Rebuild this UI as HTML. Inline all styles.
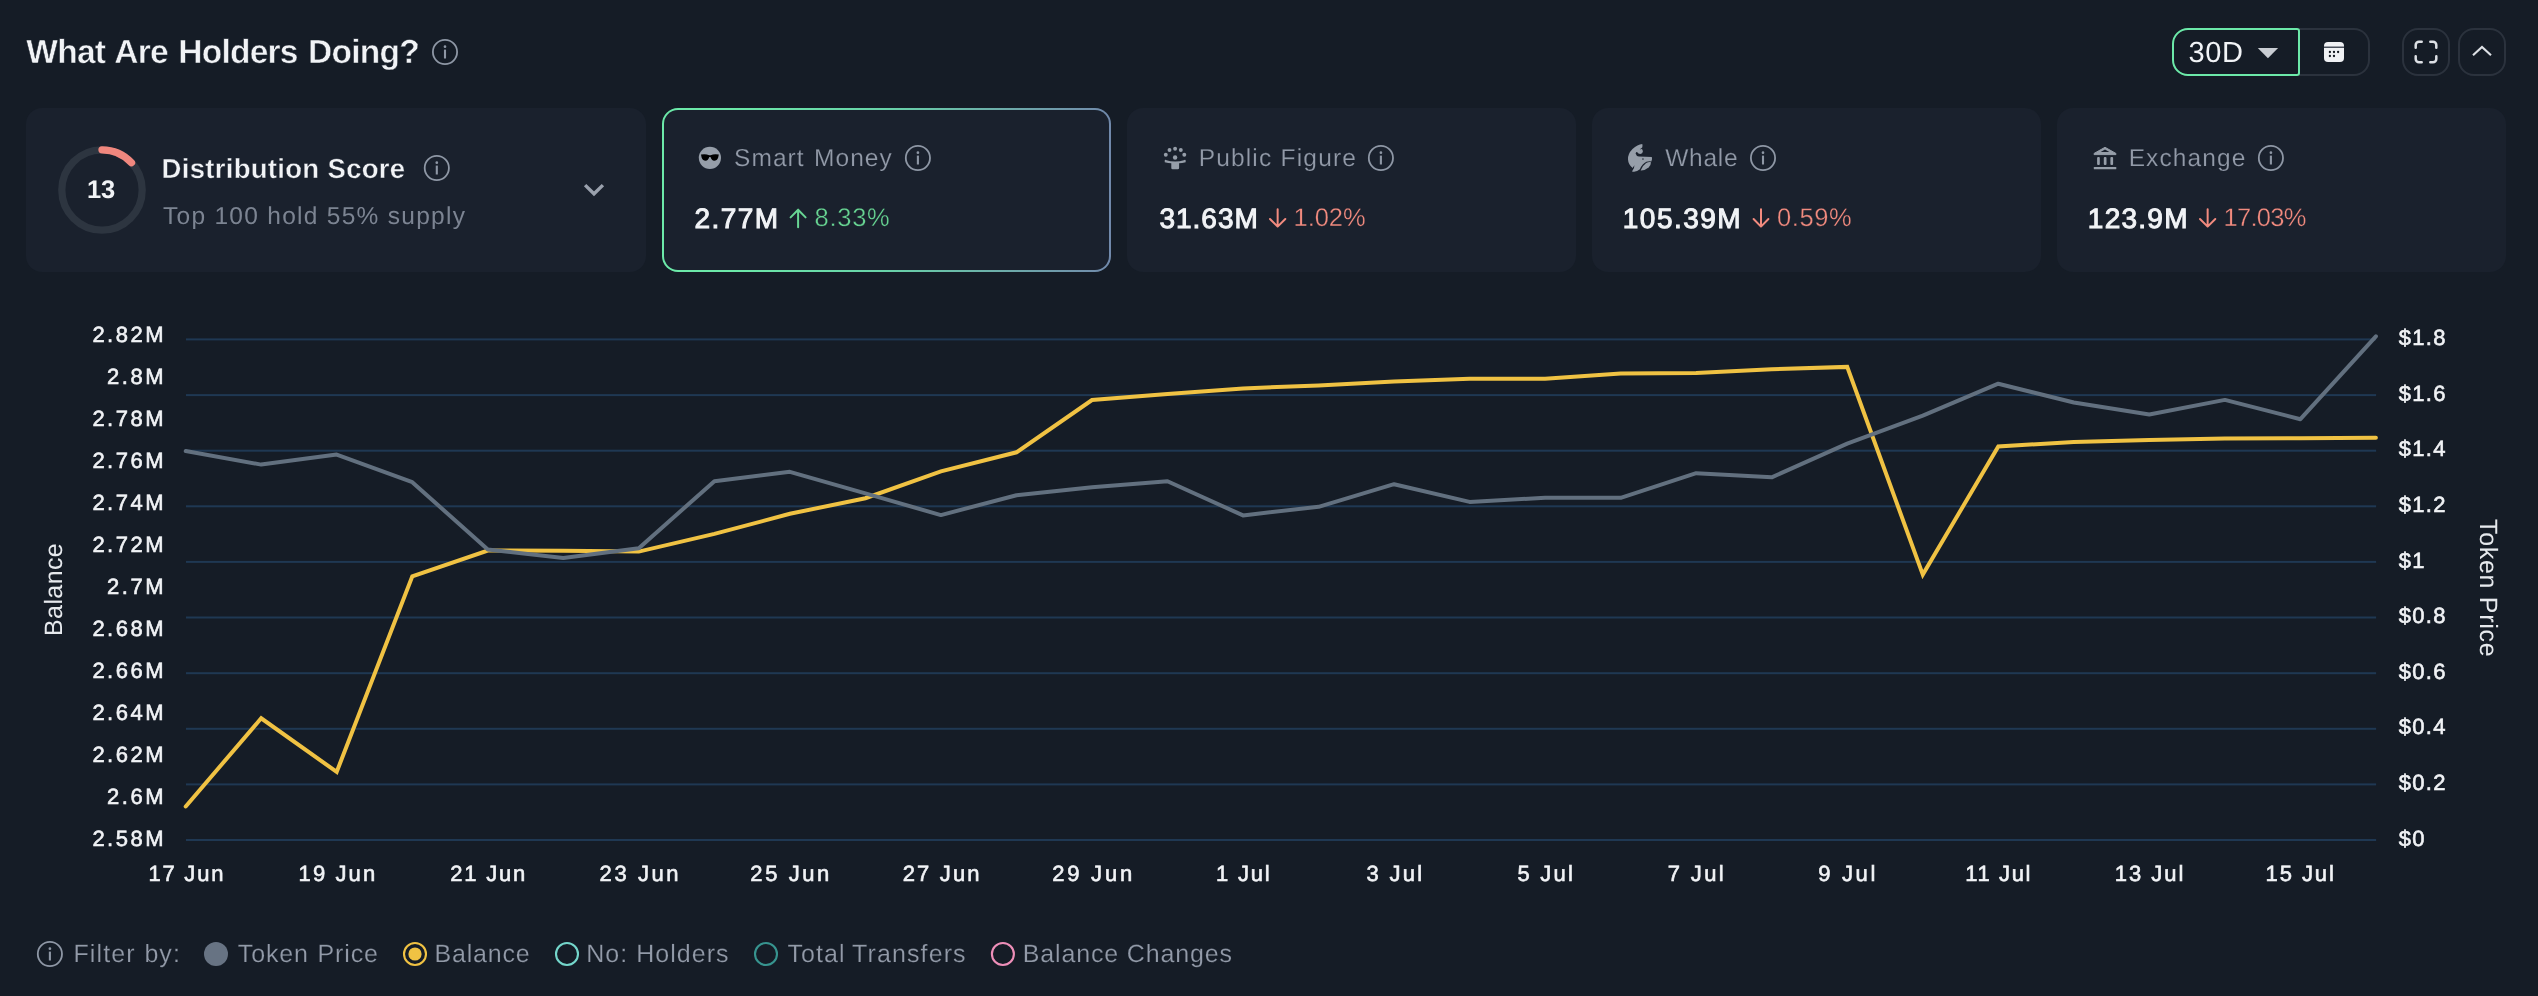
<!DOCTYPE html>
<html><head><meta charset="utf-8"><title>What Are Holders Doing?</title>
<style>
html,body{margin:0;padding:0;background:#151c26;}
body{width:2538px;height:996px;position:relative;overflow:hidden;font-family:"Liberation Sans",sans-serif;}
#root{position:absolute;left:0;top:0;width:2538px;height:996px;will-change:transform;}
.t{position:absolute;white-space:nowrap;line-height:1;text-rendering:geometricPrecision;}
.card{position:absolute;top:108px;height:164px;background:#1a212d;border-radius:16px;}
.abs{position:absolute;}
svg{position:absolute;left:0;top:0;overflow:visible;}
</style></head><body><div id="root">

<div class="card" style="left:26px;width:620px;"></div>
<div class="card" style="left:662px;width:449px;background:linear-gradient(90deg,#6ce9a9 0%,#6ce9a9 15%,#68d2a8 50%,#7189ab 100%);"><div class="abs" style="left:2px;top:2px;right:2px;bottom:2px;background:#1a212d;border-radius:14px;"></div></div>
<div class="card" style="left:1127px;width:449px;"></div>
<div class="card" style="left:1592px;width:449px;"></div>
<div class="card" style="left:2057px;width:449px;"></div>
<div class="abs" style="left:2299px;top:28px;width:69px;height:44px;border:2px solid #2b323d;border-left:none;border-radius:0 16px 16px 0;"></div>
<div class="abs" style="left:2172px;top:28px;width:124px;height:44px;border:2px solid #6ce9a9;border-radius:16px 3px 3px 16px;"></div>
<div class="abs" style="left:2402px;top:28px;width:44px;height:44px;border:2px solid #2b323d;border-radius:16px;"></div>
<div class="abs" style="left:2458px;top:28px;width:44px;height:44px;border:2px solid #2b323d;border-radius:16px;"></div>
<div class="t" style="top:36.00px;font-size:33.5px;letter-spacing:-0.75px;color:#f1f3f6;word-spacing:1.80px;font-weight:700;-webkit-text-stroke:0.5px #151c26;left:26.30px;">What Are Holders Doing?</div>
<div class="t" style="top:155.00px;font-size:27.5px;letter-spacing:0.29px;color:#f1f3f6;word-spacing:0.27px;font-weight:700;-webkit-text-stroke:0.4px #1a212d;left:161.60px;">Distribution Score</div>
<div class="t" style="top:205.00px;font-size:24.5px;letter-spacing:1.28px;color:#7c8492;left:163.00px;">Top 100 hold 55% supply</div>
<div class="t" style="top:178.00px;font-size:25.5px;letter-spacing:-0.38px;color:#f1f3f6;font-weight:700;left:87.10px;">13</div>
<div class="t" style="top:147.00px;font-size:24.5px;letter-spacing:1.02px;color:#929aa8;word-spacing:1.70px;-webkit-text-stroke:0.2px #1a212d;left:734.10px;">Smart Money</div>
<div class="t" style="top:205.00px;font-size:28.0px;letter-spacing:1.45px;color:#f1f3f6;-webkit-text-stroke:1.0px #f1f3f6;left:694.50px;">2.77M</div>
<div class="t" style="top:206.00px;font-size:25.5px;letter-spacing:0.72px;color:#68d593;-webkit-text-stroke:0.35px #1a212d;left:814.60px;">8.33%</div>
<div class="t" style="top:147.00px;font-size:24.5px;letter-spacing:1.16px;color:#929aa8;word-spacing:0.27px;-webkit-text-stroke:0.2px #1a212d;left:1198.70px;">Public Figure</div>
<div class="t" style="top:205.00px;font-size:28.0px;letter-spacing:0.97px;color:#f1f3f6;-webkit-text-stroke:1.0px #f1f3f6;left:1159.50px;">31.63M</div>
<div class="t" style="top:206.00px;font-size:25.5px;letter-spacing:-0.08px;color:#f28b7f;-webkit-text-stroke:0.35px #1a212d;left:1293.60px;">1.02%</div>
<div class="t" style="top:147.00px;font-size:24.5px;letter-spacing:0.75px;color:#929aa8;-webkit-text-stroke:0.2px #1a212d;left:1665.20px;">Whale</div>
<div class="t" style="top:205.00px;font-size:28.0px;letter-spacing:1.48px;color:#f1f3f6;-webkit-text-stroke:1.0px #f1f3f6;left:1622.80px;">105.39M</div>
<div class="t" style="top:206.00px;font-size:25.5px;letter-spacing:0.62px;color:#f28b7f;-webkit-text-stroke:0.35px #1a212d;left:1776.90px;">0.59%</div>
<div class="t" style="top:147.00px;font-size:24.5px;letter-spacing:1.09px;color:#929aa8;-webkit-text-stroke:0.2px #1a212d;left:2128.70px;">Exchange</div>
<div class="t" style="top:205.00px;font-size:28.0px;letter-spacing:1.27px;color:#f1f3f6;-webkit-text-stroke:1.0px #f1f3f6;left:2087.80px;">123.9M</div>
<div class="t" style="top:206.00px;font-size:25.5px;letter-spacing:-0.74px;color:#f28b7f;-webkit-text-stroke:0.35px #1a212d;left:2223.60px;">17.03%</div>
<div class="t" style="top:39.00px;font-size:29.0px;letter-spacing:0.62px;color:#f1f3f6;left:2188.60px;">30D</div>
<div class="t" style="top:942.00px;font-size:25.0px;letter-spacing:1.09px;color:#929aa8;word-spacing:0.75px;-webkit-text-stroke:0.2px #151c26;left:73.50px;">Filter by:</div>
<div class="t" style="top:942.00px;font-size:25.0px;letter-spacing:0.85px;color:#929aa8;word-spacing:1.01px;-webkit-text-stroke:0.2px #151c26;left:237.80px;">Token Price</div>
<div class="t" style="top:942.00px;font-size:25.0px;letter-spacing:0.79px;color:#929aa8;-webkit-text-stroke:0.2px #151c26;left:434.60px;">Balance</div>
<div class="t" style="top:942.00px;font-size:25.0px;letter-spacing:1.04px;color:#929aa8;-webkit-text-stroke:0.2px #151c26;left:586.20px;">No: Holders</div>
<div class="t" style="top:942.00px;font-size:25.0px;letter-spacing:1.11px;color:#929aa8;word-spacing:-1.27px;-webkit-text-stroke:0.2px #151c26;left:787.40px;">Total Transfers</div>
<div class="t" style="top:942.00px;font-size:25.0px;letter-spacing:0.86px;color:#929aa8;word-spacing:-0.00px;-webkit-text-stroke:0.2px #151c26;left:1022.70px;">Balance Changes</div>
<div class="t" style="top:324.00px;font-size:22.0px;letter-spacing:2.50px;color:#f1f3f6;-webkit-text-stroke:0.6px #f1f3f6;right:2371.97px;">2.82M</div>
<div class="t" style="top:366.00px;font-size:22.0px;letter-spacing:2.50px;color:#f1f3f6;-webkit-text-stroke:0.6px #f1f3f6;right:2371.97px;">2.8M</div>
<div class="t" style="top:408.00px;font-size:22.0px;letter-spacing:2.50px;color:#f1f3f6;-webkit-text-stroke:0.6px #f1f3f6;right:2371.97px;">2.78M</div>
<div class="t" style="top:450.00px;font-size:22.0px;letter-spacing:2.50px;color:#f1f3f6;-webkit-text-stroke:0.6px #f1f3f6;right:2371.97px;">2.76M</div>
<div class="t" style="top:492.00px;font-size:22.0px;letter-spacing:2.50px;color:#f1f3f6;-webkit-text-stroke:0.6px #f1f3f6;right:2371.97px;">2.74M</div>
<div class="t" style="top:534.00px;font-size:22.0px;letter-spacing:2.50px;color:#f1f3f6;-webkit-text-stroke:0.6px #f1f3f6;right:2371.97px;">2.72M</div>
<div class="t" style="top:576.00px;font-size:22.0px;letter-spacing:2.50px;color:#f1f3f6;-webkit-text-stroke:0.6px #f1f3f6;right:2371.97px;">2.7M</div>
<div class="t" style="top:618.00px;font-size:22.0px;letter-spacing:2.50px;color:#f1f3f6;-webkit-text-stroke:0.6px #f1f3f6;right:2371.97px;">2.68M</div>
<div class="t" style="top:660.00px;font-size:22.0px;letter-spacing:2.50px;color:#f1f3f6;-webkit-text-stroke:0.6px #f1f3f6;right:2371.97px;">2.66M</div>
<div class="t" style="top:702.00px;font-size:22.0px;letter-spacing:2.50px;color:#f1f3f6;-webkit-text-stroke:0.6px #f1f3f6;right:2371.97px;">2.64M</div>
<div class="t" style="top:744.00px;font-size:22.0px;letter-spacing:2.50px;color:#f1f3f6;-webkit-text-stroke:0.6px #f1f3f6;right:2371.97px;">2.62M</div>
<div class="t" style="top:786.00px;font-size:22.0px;letter-spacing:2.50px;color:#f1f3f6;-webkit-text-stroke:0.6px #f1f3f6;right:2371.97px;">2.6M</div>
<div class="t" style="top:828.00px;font-size:22.0px;letter-spacing:2.50px;color:#f1f3f6;-webkit-text-stroke:0.6px #f1f3f6;right:2371.97px;">2.58M</div>
<div class="t" style="top:327.00px;font-size:22.0px;letter-spacing:1.30px;color:#f1f3f6;-webkit-text-stroke:0.6px #f1f3f6;left:2398.80px;">$1.8</div>
<div class="t" style="top:383.00px;font-size:22.0px;letter-spacing:1.30px;color:#f1f3f6;-webkit-text-stroke:0.6px #f1f3f6;left:2398.80px;">$1.6</div>
<div class="t" style="top:438.00px;font-size:22.0px;letter-spacing:1.30px;color:#f1f3f6;-webkit-text-stroke:0.6px #f1f3f6;left:2398.80px;">$1.4</div>
<div class="t" style="top:494.00px;font-size:22.0px;letter-spacing:1.30px;color:#f1f3f6;-webkit-text-stroke:0.6px #f1f3f6;left:2398.80px;">$1.2</div>
<div class="t" style="top:550.00px;font-size:22.0px;letter-spacing:1.30px;color:#f1f3f6;-webkit-text-stroke:0.6px #f1f3f6;left:2398.80px;">$1</div>
<div class="t" style="top:605.00px;font-size:22.0px;letter-spacing:1.30px;color:#f1f3f6;-webkit-text-stroke:0.6px #f1f3f6;left:2398.80px;">$0.8</div>
<div class="t" style="top:661.00px;font-size:22.0px;letter-spacing:1.30px;color:#f1f3f6;-webkit-text-stroke:0.6px #f1f3f6;left:2398.80px;">$0.6</div>
<div class="t" style="top:716.00px;font-size:22.0px;letter-spacing:1.30px;color:#f1f3f6;-webkit-text-stroke:0.6px #f1f3f6;left:2398.80px;">$0.4</div>
<div class="t" style="top:772.00px;font-size:22.0px;letter-spacing:1.30px;color:#f1f3f6;-webkit-text-stroke:0.6px #f1f3f6;left:2398.80px;">$0.2</div>
<div class="t" style="top:828.00px;font-size:22.0px;letter-spacing:1.30px;color:#f1f3f6;-webkit-text-stroke:0.6px #f1f3f6;left:2398.80px;">$0</div>
<div class="t" style="top:863.00px;font-size:22.0px;letter-spacing:1.80px;color:#f1f3f6;-webkit-text-stroke:0.6px #f1f3f6;left:148.40px;">17 Jun</div>
<div class="t" style="top:863.00px;font-size:22.0px;letter-spacing:2.10px;color:#f1f3f6;-webkit-text-stroke:0.6px #f1f3f6;left:298.60px;">19 Jun</div>
<div class="t" style="top:863.00px;font-size:22.0px;letter-spacing:1.80px;color:#f1f3f6;-webkit-text-stroke:0.6px #f1f3f6;left:450.30px;">21 Jun</div>
<div class="t" style="top:863.00px;font-size:22.0px;letter-spacing:2.58px;color:#f1f3f6;-webkit-text-stroke:0.6px #f1f3f6;left:599.60px;">23 Jun</div>
<div class="t" style="top:863.00px;font-size:22.0px;letter-spacing:2.60px;color:#f1f3f6;-webkit-text-stroke:0.6px #f1f3f6;left:750.30px;">25 Jun</div>
<div class="t" style="top:863.00px;font-size:22.0px;letter-spacing:2.16px;color:#f1f3f6;-webkit-text-stroke:0.6px #f1f3f6;left:902.70px;">27 Jun</div>
<div class="t" style="top:863.00px;font-size:22.0px;letter-spacing:2.78px;color:#f1f3f6;-webkit-text-stroke:0.6px #f1f3f6;left:1052.20px;">29 Jun</div>
<div class="t" style="top:863.00px;font-size:22.0px;letter-spacing:1.75px;color:#f1f3f6;-webkit-text-stroke:0.6px #f1f3f6;left:1216.10px;">1 Jul</div>
<div class="t" style="top:863.00px;font-size:22.0px;letter-spacing:2.28px;color:#f1f3f6;-webkit-text-stroke:0.6px #f1f3f6;left:1366.60px;">3 Jul</div>
<div class="t" style="top:863.00px;font-size:22.0px;letter-spacing:2.25px;color:#f1f3f6;-webkit-text-stroke:0.6px #f1f3f6;left:1517.40px;">5 Jul</div>
<div class="t" style="top:863.00px;font-size:22.0px;letter-spacing:2.35px;color:#f1f3f6;-webkit-text-stroke:0.6px #f1f3f6;left:1667.80px;">7 Jul</div>
<div class="t" style="top:863.00px;font-size:22.0px;letter-spacing:2.65px;color:#f1f3f6;-webkit-text-stroke:0.6px #f1f3f6;left:1818.30px;">9 Jul</div>
<div class="t" style="top:863.00px;font-size:22.0px;letter-spacing:1.64px;color:#f1f3f6;-webkit-text-stroke:0.6px #f1f3f6;left:1965.20px;">11 Jul</div>
<div class="t" style="top:863.00px;font-size:22.0px;letter-spacing:2.00px;color:#f1f3f6;-webkit-text-stroke:0.6px #f1f3f6;left:2114.70px;">13 Jul</div>
<div class="t" style="top:863.00px;font-size:22.0px;letter-spacing:1.94px;color:#f1f3f6;-webkit-text-stroke:0.6px #f1f3f6;left:2265.50px;">15 Jul</div>
<div class="t" style="left:42.13px;top:635.60px;transform-origin:0 0;transform:rotate(-90deg);font-size:25px;letter-spacing:0.4px;color:#e6e9ed;">Balance</div>
<div class="t" style="left:2500.17px;top:518.50px;transform-origin:0 0;transform:rotate(90deg);font-size:25px;letter-spacing:0.7px;color:#e6e9ed;">Token Price</div>
<svg width="2538" height="996" viewBox="0 0 2538 996">
<rect x="186" y="338.4" width="2190.1" height="2" fill="#1f3853"/>
<rect x="186" y="394.1" width="2190.1" height="2" fill="#1f3853"/>
<rect x="186" y="449.7" width="2190.1" height="2" fill="#1f3853"/>
<rect x="186" y="505.3" width="2190.1" height="2" fill="#1f3853"/>
<rect x="186" y="560.9" width="2190.1" height="2" fill="#1f3853"/>
<rect x="186" y="616.5" width="2190.1" height="2" fill="#1f3853"/>
<rect x="186" y="672.2" width="2190.1" height="2" fill="#1f3853"/>
<rect x="186" y="727.8" width="2190.1" height="2" fill="#1f3853"/>
<rect x="186" y="783.4" width="2190.1" height="2" fill="#1f3853"/>
<rect x="186" y="839.0" width="2190.1" height="2" fill="#1f3853"/>
<polyline points="185.7,806.5 261.2,718.3 336.7,771.9 412.3,576.4 487.8,550.5 563.3,550.8 638.8,551.6 714.4,533.9 789.9,513.8 865.4,498.2 940.9,471.4 1016.5,452.3 1092.0,400.0 1167.5,394.1 1243.0,388.4 1318.6,385.4 1394.1,381.6 1469.6,378.8 1545.1,378.8 1620.7,373.6 1696.2,373.1 1771.7,369.3 1847.2,366.9 1922.8,574.6 1998.3,446.4 2073.8,441.9 2149.3,440.0 2224.9,438.5 2300.4,438.3 2375.9,437.8" fill="none" stroke="#f0c243" stroke-width="4" stroke-linejoin="miter" stroke-linecap="round"/>
<polyline points="185.7,451.0 261.2,464.6 336.7,454.6 412.3,482.2 487.8,549.5 563.3,558.0 638.8,548.2 714.4,481.2 789.9,471.8 865.4,493.4 940.9,515.1 1016.5,495.2 1092.0,487.3 1167.5,481.2 1243.0,515.4 1318.6,506.8 1394.1,484.2 1469.6,501.9 1545.1,497.8 1620.7,497.8 1696.2,473.2 1771.7,477.3 1847.2,443.7 1922.8,415.6 1998.3,383.7 2073.8,402.5 2149.3,414.5 2224.9,399.9 2300.4,419.2 2375.9,336.3" fill="none" stroke="#62707f" stroke-width="4" stroke-linejoin="round" stroke-linecap="round"/>
<g stroke="#8e97a5" fill="none"><circle cx="445.0" cy="52.0" r="12.1" stroke-width="1.8"/><line x1="445.0" y1="49.6" x2="445.0" y2="58.5" stroke-width="2.1" stroke-linecap="butt"/></g><circle cx="445.0" cy="46.65" r="1.35" fill="#8e97a5"/>
<g stroke="#8e97a5" fill="none"><circle cx="436.8" cy="168" r="12.1" stroke-width="1.8"/><line x1="436.8" y1="165.6" x2="436.8" y2="174.5" stroke-width="2.1" stroke-linecap="butt"/></g><circle cx="436.8" cy="162.65" r="1.35" fill="#8e97a5"/>
<g stroke="#8e97a5" fill="none"><circle cx="917.9" cy="158" r="12.1" stroke-width="1.8"/><line x1="917.9" y1="155.6" x2="917.9" y2="164.5" stroke-width="2.1" stroke-linecap="butt"/></g><circle cx="917.9" cy="152.65" r="1.35" fill="#8e97a5"/>
<g stroke="#8e97a5" fill="none"><circle cx="1380.9" cy="158" r="12.1" stroke-width="1.8"/><line x1="1380.9" y1="155.6" x2="1380.9" y2="164.5" stroke-width="2.1" stroke-linecap="butt"/></g><circle cx="1380.9" cy="152.65" r="1.35" fill="#8e97a5"/>
<g stroke="#8e97a5" fill="none"><circle cx="1763" cy="158" r="12.1" stroke-width="1.8"/><line x1="1763" y1="155.6" x2="1763" y2="164.5" stroke-width="2.1" stroke-linecap="butt"/></g><circle cx="1763" cy="152.65" r="1.35" fill="#8e97a5"/>
<g stroke="#8e97a5" fill="none"><circle cx="2270.9" cy="158" r="12.1" stroke-width="1.8"/><line x1="2270.9" y1="155.6" x2="2270.9" y2="164.5" stroke-width="2.1" stroke-linecap="butt"/></g><circle cx="2270.9" cy="152.65" r="1.35" fill="#8e97a5"/>
<g stroke="#8e97a5" fill="none"><circle cx="49.9" cy="954.0" r="12.1" stroke-width="1.8"/><line x1="49.9" y1="951.6" x2="49.9" y2="960.5" stroke-width="2.1" stroke-linecap="butt"/></g><circle cx="49.9" cy="948.65" r="1.35" fill="#8e97a5"/>
<circle cx="102.0" cy="190.0" r="40.2" fill="none" stroke="#2d3540" stroke-width="7.3"/>
<path d="M102.0 149.8 A40.2 40.2 0 0 1 131.50 162.69" fill="none" stroke="#f0877e" stroke-width="7.3" stroke-linecap="round"/>
<path d="M585.1 185.1 L594 193.8 L602.9 185.1" fill="none" stroke="#9aa1ad" stroke-width="3.4" stroke-linecap="butt" stroke-linejoin="miter"/>
<path d="M798.1 227.2 L798.1 209.79999999999998 M790.6 217.39999999999998 L798.1 209.79999999999998 L805.6 217.39999999999998" fill="none" stroke="#68d593" stroke-width="2.0" stroke-linecap="round" stroke-linejoin="round"/>
<path d="M1277.65 209.2 L1277.65 226.6 M1270 219.0 L1277.65 226.6 L1285.3 219.0" fill="none" stroke="#f28b7f" stroke-width="2.0" stroke-linecap="round" stroke-linejoin="round"/>
<path d="M1761.0 209.2 L1761.0 226.6 M1753.6 219.0 L1761.0 226.6 L1768.4 219.0" fill="none" stroke="#f28b7f" stroke-width="2.0" stroke-linecap="round" stroke-linejoin="round"/>
<path d="M2207.65 209.2 L2207.65 226.6 M2200 219.0 L2207.65 226.6 L2215.3 219.0" fill="none" stroke="#f28b7f" stroke-width="2.0" stroke-linecap="round" stroke-linejoin="round"/>
<path d="M2257.8 47.9 L2278.1 47.9 L2267.95 58.2 Z" fill="#c9cdd3"/>
<rect x="2324" y="42" width="20" height="20" rx="4" fill="#f0f1f4"/><rect x="2324" y="46.5" width="20" height="1.5" fill="#4a515c"/>
<circle cx="2329.9" cy="52" r="1.15" fill="#10151d"/>
<circle cx="2334" cy="52" r="1.15" fill="#10151d"/>
<circle cx="2338.1" cy="52" r="1.15" fill="#10151d"/>
<circle cx="2329.9" cy="56" r="1.15" fill="#10151d"/>
<circle cx="2334" cy="56" r="1.15" fill="#10151d"/>
<path d="M2415.7 47.7 V45.0 a3.3 3.3 0 0 1 3.3 -3.3 H2421.7 M2430.3 41.7 H2433.0 a3.3 3.3 0 0 1 3.3 3.3 V47.7 M2436.3 56.3 V59.0 a3.3 3.3 0 0 1 -3.3 3.3 H2430.3 M2421.7 62.3 H2419.0 a3.3 3.3 0 0 1 -3.3 -3.3 V56.3" fill="none" stroke="#dde0e5" stroke-width="2.5" stroke-linecap="round"/>
<path d="M2473 55.3 L2482 47 L2491 55.3" fill="none" stroke="#dde0e5" stroke-width="2.1" stroke-linecap="butt" stroke-linejoin="miter"/>
<circle cx="709.9" cy="157.8" r="11.1" fill="#969ea9"/>
<path d="M701 154.6 Q705.5 153.6 709.2 155.2 L710.6 155.2 Q714.3 153.6 718.8 154.6 L718.2 157.6 Q717 160.8 714.2 160.8 Q711.6 160.6 710.5 157 L709.3 157 Q708.2 160.6 705.6 160.8 Q702.8 160.8 701.6 157.6 Z" fill="#000"/>
<circle cx="1165.8" cy="154.7" r="1.95" fill="#969ea9"/>
<circle cx="1169.5" cy="150.0" r="1.95" fill="#969ea9"/>
<circle cx="1175.1" cy="148.8" r="1.95" fill="#969ea9"/>
<circle cx="1180.8" cy="150.0" r="1.95" fill="#969ea9"/>
<circle cx="1184.3" cy="154.7" r="1.95" fill="#969ea9"/>
<circle cx="1175.1" cy="157.5" r="2.2" fill="#969ea9"/>
<path d="M1164.8 160 Q1165.6 159.6 1166.6 160.2 Q1170 161.4 1175.1 161.4 Q1180.2 161.4 1183.8 160.2 Q1184.8 159.6 1185.6 160 L1185.7 162.2 Q1182 163.2 1179.1 163.2 L1179.1 168 Q1179.1 169.3 1177.8 169.3 L1172.6 169.3 Q1171.3 169.3 1171.3 168 L1171.3 163.2 Q1168.4 163.2 1164.7 162.2 Z" fill="#969ea9"/>
<g transform="translate(1618,136)" fill="#969ea9"><path d="M24.3 8 Q19.5 8.6 14.5 13 Q9.6 18 10 23.5 Q10.3 28.6 14.6 32 L16.4 29.2 Q16.6 32.6 14 35.4 Q18.4 36.4 21.9 33.2 Q24.4 27.6 28.4 25.8 Q31 24.8 33.4 25.4 Q34.6 23.2 33.8 20.9 L21 20.6 Q18.2 20 17.6 17.4 Q18 16 19 16 Q20.4 18 22.4 17.9 Q24.6 17.6 24.9 15.4 Q24.9 13.4 23.3 12.8 Q22.3 13.4 21.7 14.2 Q22.6 12 24.2 11.4 Q24.8 9.6 24.3 8 Z"/><path d="M22.6 34.4 Q24.6 29.4 28.2 27 Q30.6 25.8 33 26.2 Q33.2 28.2 30.6 31.6 Q27.2 34.6 22.6 34.4 Z"/><rect x="24.2" y="22.3" width="1.5" height="1.5" fill="#3a424e"/></g>
<path d="M2105 147.3 L2115.9 153.4 L2115.9 154.6 L2094.1 154.6 L2094.1 153.4 Z" fill="#969ea9" stroke="#969ea9" stroke-width="1" stroke-linejoin="round"/>
<path d="M2105 149.4 L2109.4 152 L2100.6 152 Z" fill="#1a212d"/>
<rect x="2097.1" y="156.9" width="2.7" height="8" rx="1" fill="#969ea9"/>
<rect x="2103.8" y="156.9" width="2.7" height="8" rx="1" fill="#969ea9"/>
<rect x="2110.4" y="156.9" width="2.7" height="8" rx="1" fill="#969ea9"/>
<rect x="2093.8" y="166.9" width="22.5" height="2.4" rx="0.6" fill="#969ea9"/>
<circle cx="216" cy="954.0" r="12" fill="#677383"/>
<circle cx="415" cy="954.0" r="11" fill="none" stroke="#f0c243" stroke-width="2.1"/><circle cx="415" cy="954.0" r="6.6" fill="#f0c243"/>
<circle cx="567" cy="954.0" r="11" fill="none" stroke="#74d6cb" stroke-width="2.1"/>
<circle cx="766" cy="954.0" r="11" fill="none" stroke="#37948f" stroke-width="2.1"/>
<circle cx="1002.9" cy="954.0" r="11" fill="none" stroke="#ee8fb9" stroke-width="2.1"/>
</svg>
</div></body></html>
